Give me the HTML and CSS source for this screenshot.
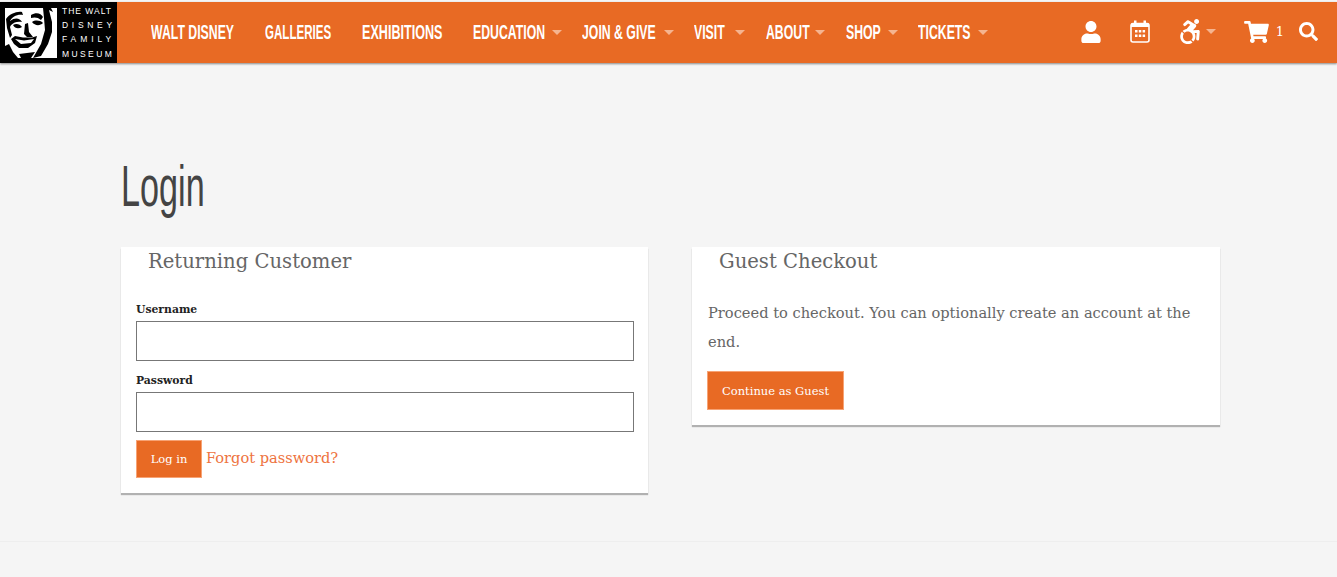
FILE: index.html
```html
<!DOCTYPE html>
<html lang="en">
<head>
  <meta charset="UTF-8">
  <meta name="viewport" content="width=device-width, initial-scale=1.0">
  <title>Login</title>
  <link rel="stylesheet" href="styles.css">
</head>
<body>
  <header class="topbar">
    <a class="logo" href="#">
      <svg class="logo-face" viewBox="0 0 52 50" width="52" height="50">
        <rect width="52" height="50" fill="#fff"/>
        <path d="M1 11C4 6 12 3 17 4L18 7C12 6 7 9 5 13L8 13L5 19L7 27L5 30L2 20Z" fill="#000"/>
        <path d="M5 13C10 9 15 10 17 14C13 13 9 14 6 17Z" fill="#000"/>
        <path d="M8 17C11 15 15 16 17 19C14 21 10 21 8 17Z" fill="#000"/>
        <path d="M26 7C31 4 36 5 38 9L36 12C33 9 29 9 26 10Z" fill="#000"/>
        <path d="M27 14C30 12 35 12 38 15C35 18 30 18 27 14Z" fill="#000"/>
        <path d="M20 16L23 15L24 24L28 29L22 29L19 26Z" fill="#000"/>
        <path d="M38 0H46L48 4L44 2L47 14L47 24L43 36L36 48L28 50L36 36L40 22L39 10Z" fill="#000"/>
        <path d="M6 31L10 28L18 29.500L27 29.500L32 28L30 35L23 40H14L9 36Z" fill="#000"/>
        <path d="M10 31L19 32.500L29 31L26 35L16 36Z" fill="#fff"/>
        <path d="M0 38L4 36L8 44L13 50H0Z" fill="#000"/>
        <path d="M14 46L30 44L26 50H16Z" fill="#000"/>
      </svg>
      <span class="logo-text">
        <span class="logo-walt">THE WALT</span>
        <span class="logo-disney">DISNEY</span>
        <span class="logo-family">FAMILY</span>
        <span class="logo-museum">MUSEUM</span>
      </span>
    </a>
    <nav class="mainnav">
      <a href="#" class="w83"><span>WALT DISNEY</span></a>
      <a href="#" class="w66"><span>GALLERIES</span></a>
      <a href="#" class="w80"><span>EXHIBITIONS</span></a>
      <a href="#" class="w71 drop"><span>EDUCATION</span></a>
      <a href="#" class="w74 drop"><span>JOIN &amp; GIVE</span></a>
      <a href="#" class="w33 drop"><span>VISIT</span></a>
      <a href="#" class="w41 drop"><span>ABOUT</span></a>
      <a href="#" class="w34 drop"><span>SHOP</span></a>
      <a href="#" class="w52 drop"><span>TICKETS</span></a>
    </nav>
    <div class="tools">
      <a href="#" class="tool-user"><svg viewBox="0 0 448 512" width="20" height="22"><path fill="#fff" d="M224 256c70.7 0 128-57.3 128-128S294.7 0 224 0 96 57.3 96 128s57.3 128 128 128zm89.6 32h-16.7c-22.2 10.2-46.9 16-72.9 16s-50.6-5.8-72.9-16h-16.7C60.2 288 0 348.2 0 422.4V464c0 26.5 21.5 48 48 48h352c26.5 0 48-21.5 48-48v-41.6c0-74.2-60.2-134.4-134.4-134.4z"/></svg></a>
      <a href="#" class="tool-cal"><svg viewBox="0 0 20 23" width="20" height="23"><path fill="none" stroke="#fff" stroke-width="1.6" d="M3 3.500H17A2 2 0 0 1 19 5.500V20A2 2 0 0 1 17 22H3A2 2 0 0 1 1 20V5.500A2 2 0 0 1 3 3.500Z"/><path fill="#fff" d="M1 3.500H19V7H1ZM4 0.500H6.500V5H4ZM13.500 0.500H16V5H13.500ZM5 10H7.500V12.500H5ZM8.800 10H11.300V12.500H8.800ZM12.600 10H15.100V12.500H12.600ZM5 14.500H7.500V17H5ZM8.800 14.500H11.300V17H8.800ZM12.600 14.500H15.100V17H12.600Z"/></svg></a>
      <a href="#" class="tool-access drop"><svg viewBox="0 0 448 512" width="22" height="25"><path fill="#fff" d="M423.9 255.8L411 413.1c-3.3 40.7-63.9 35.1-60.6-4.9l10-122.5-41.1 2.3c10.1 20.7 15.8 43.9 15.8 68.5 0 41.2-16.1 78.7-42.3 106.5l-39.3-39.3c57.9-63.7 13.1-167.2-74-167.2-25.9 0-49.5 9.9-67.2 26L73 243.2c22-20.7 50.1-35.1 81.4-40.2l75.3-85.7-42.6-24.8-51.6 46c-30 26.8-70.6-18.5-40.5-45.4l68-60.7c9.8-8.8 24.1-10.2 35.5-3.6 0 0 139.3 80.9 139.5 81.1 16.2 10.1 20.7 36 6.1 52.6L285.7 229l106.1-5.9c18.5-1.1 33.6 14.4 32.1 32.7zm-64.9-154c28.1 0 50.9-22.8 50.9-50.9C409.900 22.800 387.100 0 359 0c-28.100 0-50.900 22.800-50.900 50.900 0 28.100 22.800 50.900 50.900 50.900zM179.600 456.500c-80.600 0-127.400-90.600-82.700-156.100l-39.700-39.700C36.400 287 24 320.300 24 356.400c0 130.700 150.700 201.400 251.400 122.500l-39.700-39.700c-16 10.900-35.300 17.300-56.100 17.300z"/></svg></a>
      <a href="#" class="tool-cart"><svg viewBox="0 0 576 512" width="25" height="22"><path fill="#fff" d="M528.12 301.319l47.273-208C578.806 78.301 567.391 64 551.99 64H159.208l-9.166-44.81C147.758 8.021 137.93 0 126.529 0H24C10.745 0 0 10.745 0 24v16c0 13.255 10.745 24 24 24h69.883l70.248 343.435C147.325 417.1 136 435.222 136 456c0 30.928 25.072 56 56 56s56-25.072 56-56c0-15.674-6.447-29.835-16.824-40h209.647C430.447 426.165 424 440.326 424 456c0 30.928 25.072 56 56 56s56-25.072 56-56c0-22.172-12.888-41.332-31.579-50.405l5.517-24.276c3.413-15.018-8.002-29.319-23.403-29.319H218.117l-6.545-32h293.145c11.206 0 20.92-7.754 23.403-18.681z"/></svg><span class="cart-count">1</span></a>
      <a href="#" class="tool-search"><svg viewBox="0 0 512 512" width="19" height="19"><path fill="#fff" d="M505 442.7L405.3 343c-4.5-4.5-10.6-7-17-7H372c27.6-35.3 44-79.7 44-128C416 93.1 322.9 0 208 0S0 93.1 0 208s93.1 208 208 208c48.3 0 92.7-16.4 128-44v16.3c0 6.4 2.5 12.5 7 17l99.7 99.7c9.4 9.4 24.6 9.4 33.9 0l28.3-28.3c9.4-9.4 9.4-24.6.1-34zM208 336c-70.7 0-128-57.2-128-128 0-70.7 57.2-128 128-128 70.7 0 128 57.2 128 128 0 70.7-57.2 128-128 128z"/></svg></a>
    </div>
  </header>

  <main class="content">
    <h1 class="page-title"><span>Login</span></h1>
    <div class="columns">
      <section class="card card-login">
        <h2>Returning Customer</h2>
        <form class="login-form">
          <label for="username">Username</label>
          <input type="text" id="username">
          <label for="password">Password</label>
          <input type="password" id="password">
          <div class="form-actions">
            <button type="button" class="btn btn-login">Log in</button>
            <a href="#" class="forgot">Forgot password?</a>
          </div>
        </form>
      </section>
      <section class="card card-guest">
        <h2>Guest Checkout</h2>
        <p>Proceed to checkout. You can optionally create an account at the end.</p>
        <button type="button" class="btn btn-guest">Continue as Guest</button>
      </section>
    </div>
  </main>
  <div class="footer-line"></div>
</body>
</html>
```

FILE: styles.css
```css
* { box-sizing: border-box; }
html, body { height: 100%; }
body { margin: 0; background-color: #f5f5f5; font-family: "DejaVu Serif", serif; color: #666; overflow: hidden; }
a { text-decoration: none; color: inherit; }

.topbar { display: flex; align-items: stretch; height: 61px; margin-top: 2px; background-color: #e86a24; box-shadow: 0 1px 2px rgba(0, 0, 0, 0.45); }
.logo { display: flex; width: 117px; background-color: #000; padding: 6px 0 0 5px; }
.logo-face { flex: none; }
.logo-text { display: flex; flex-direction: column; margin: -4px 0 0 5px; color: #fff; font-family: "Liberation Sans", sans-serif; font-size: 8.5px; line-height: 14.2px; white-space: nowrap; }
.logo-walt { letter-spacing: 1px; }
.logo-disney { letter-spacing: 3.7px; }
.logo-family { letter-spacing: 3.9px; }
.logo-museum { letter-spacing: 2.4px; }

.mainnav { display: flex; align-items: center; padding: 0 0 1px 34px; }
.mainnav a { position: relative; display: block; height: 22px; margin-right: 31px; color: #fff; font-family: "Liberation Sans", sans-serif; font-weight: bold; font-size: 21px; line-height: 22px; white-space: nowrap; }
.mainnav a span { display: inline-block; transform-origin: left center; transform: scaleX(0.585); }
.mainnav a.drop { margin-right: 38px; }
.mainnav a.w33, .mainnav a.w41 { margin-right: 39px; }
.mainnav a.w66 span { transform: scaleX(0.55); }
.mainnav a.w80 span { transform: scaleX(0.6); }
.w83 { width: 83px; }
.w66 { width: 66px; }
.w80 { width: 80px; }
.w71 { width: 71px; }
.w74 { width: 74px; }
.w33 { width: 33px; }
.w41 { width: 41px; }
.w34 { width: 34px; }
.w52 { width: 52px; }

.drop::after { content: ""; position: absolute; top: 9px; right: -18px; border-left: 5px solid transparent; border-right: 5px solid transparent; border-top: 5px solid #f5b48f; }

.tools { display: flex; align-items: center; margin-left: auto; padding: 0 19px 2px 0; }
.tools a { display: flex; align-items: center; position: relative; }
.tool-user { margin-right: 29px; }
.tool-cal { margin-right: 29px; }
.tool-access { margin-right: 43px; }
.tools .tool-access.drop::after { top: 10px; right: -15px; }
.tool-cart { margin-right: 15px; }
.cart-count { margin-left: 7px; color: #fff; font-size: 13px; }

.content { padding: 90px 117px 0 121px; }
.page-title { margin: 0 0 27px; height: 67px; color: #444; font-family: "Liberation Sans", sans-serif; font-weight: normal; font-size: 57px; line-height: 67px; }
.page-title span { display: inline-block; transform-origin: left center; transform: scaleX(0.6); }

.columns { display: grid; grid-template-columns: 527px 528px; column-gap: 44px; align-items: start; }
.card { background: #fff; box-shadow: 0 2px 1px rgba(0, 0, 0, 0.28); }
.card h2 { margin: 0 -15px; padding: 1px 0 0 27px; font-weight: normal; font-size: 19.600px; line-height: 28px; color: #666; }
.card-login { height: 246px; padding: 0 14px 0 15px; }
.card-guest { height: 178px; padding: 0 15px; }
.card-guest p { margin: 22px 0 15px 1px; font-size: 14.640px; line-height: 29px; }

.login-form { display: flex; flex-direction: column; padding-top: 26px; }
.login-form label { color: #222; font-size: 10.800px; font-weight: bold; line-height: 16px; margin-bottom: 3px; }
.login-form input { height: 40px; border: 1px solid #777; background: #fff; margin-bottom: 12px; }
.form-actions { display: flex; align-items: flex-start; margin-top: -4px; }
.forgot { margin: 7px 0 0 4px; color: #ee7340; font-size: 14.600px; line-height: 22px; }

.btn { background-color: #e86a24; border: 1px solid #f7a375; color: #fff; font-family: "DejaVu Serif", serif; font-size: 11.500px; cursor: pointer; }
.btn-login { width: 66px; height: 38px; }
.btn-guest { width: 137px; height: 39px; }

.footer-line { position: absolute; left: 0; right: 0; top: 541px; border-top: 1px solid #eee; }
```
